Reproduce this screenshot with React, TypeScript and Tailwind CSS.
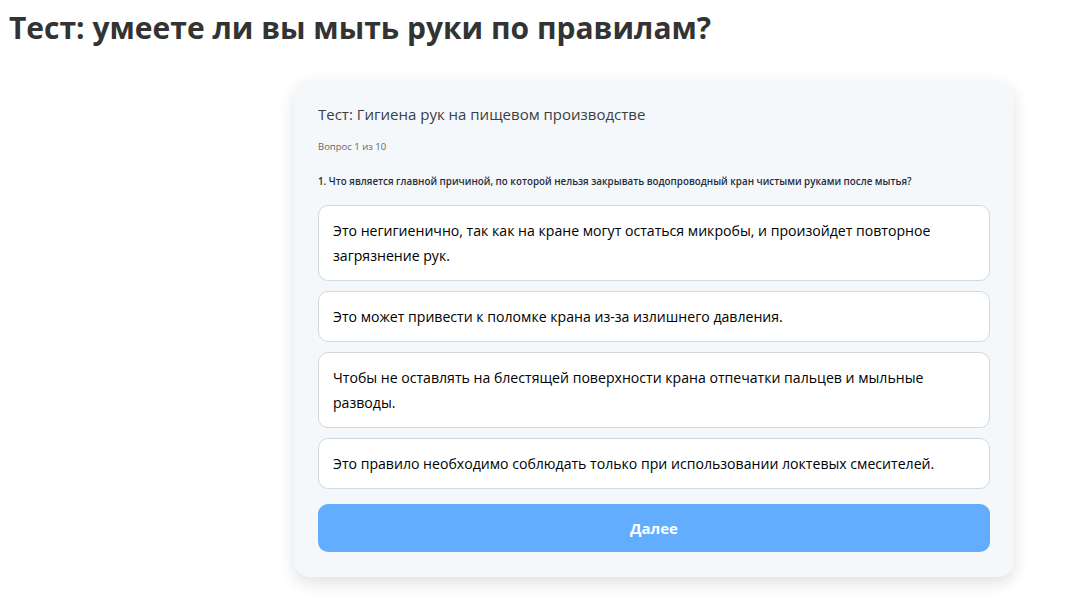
const options = [
  "Это негигиенично, так как на кране могут остаться микробы, и произойдет повторное загрязнение рук.",
  "Это может привести к поломке крана из-за излишнего давления.",
  "Чтобы не оставлять на блестящей поверхности крана отпечатки пальцев и мыльные разводы.",
  "Это правило необходимо соблюдать только при использовании локтевых смесителей.",
];

export default function App() {
  return (
    <div className="min-h-screen bg-white font-['Open_Sans',sans-serif] text-[#333]">
      <h1 className="px-[9px] pt-[8px] text-[30px] font-bold leading-[40px] text-[#333]">
        Тест: умеете ли вы мыть руки по правилам?
      </h1>
      <div className="flex pl-[294px] pt-[32px] pb-6">
        <div className="w-[720px] rounded-[16px] bg-[#f5f8fb] px-6 pt-[23px] pb-[25px] shadow-[0_6px_16px_rgba(0,0,0,0.12)]">
          <div className="text-[15px] leading-[22px] text-[#3a3f45]">Тест: Гигиена рук на пищевом производстве</div>
          <div className="mt-[15px] text-[9.5px] leading-[14px] text-[#666]">Вопрос 1 из 10</div>
          <div className="mt-[21px] text-[9.8px] font-semibold leading-[14px] text-[#1f2d3d]">
            1. Что является главной причиной, по которой нельзя закрывать водопроводный кран чистыми руками после мытья?
          </div>
          <div className="mt-[16px] flex flex-col gap-[10px]">
            {options.map((o) => (
              <button
                key={o}
                type="button"
                className="rounded-[10px] border border-[#d4d7dd] bg-white px-[14px] py-[12px] text-left text-[14.1px] leading-[25px] text-black"
              >
                {o}
              </button>
            ))}
          </div>
          <button
            type="button"
            className="mt-[15px] h-[48px] w-full rounded-[10px] bg-[#63adff] text-[15px] font-bold text-white"
          >
            Далее
          </button>
        </div>
      </div>
    </div>
  );
}
